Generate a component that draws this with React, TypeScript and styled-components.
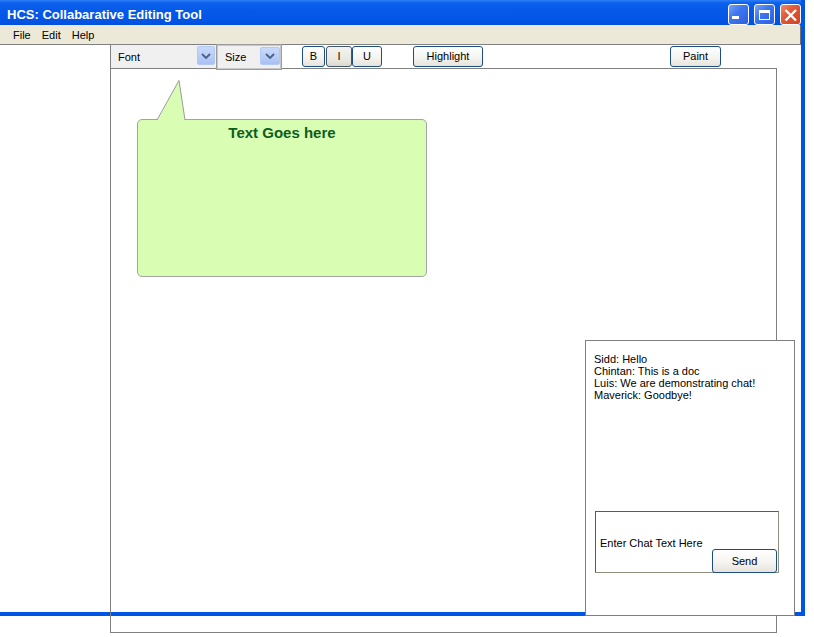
import React from "react";
import styled, { createGlobalStyle } from "styled-components";

const GlobalStyle = createGlobalStyle`
  html, body { margin: 0; padding: 0; background: #ffffff; }
  body {
    font-family: "Liberation Sans", Arial, sans-serif;
    width: 814px;
    height: 637px;
    overflow: hidden;
  }
  * { box-sizing: border-box; }
`;

const Window = styled.div`
  position: relative;
  width: 805px;
  height: 616px;
  border-right: 4px solid #0055e5;
  border-bottom: 4px solid #0055e5;
  display: flex;
  flex-direction: column;
`;

const TitleBar = styled.div`
  height: 25px;
  flex: none;
  display: flex;
  align-items: flex-start;
  padding-left: 7px;
  background: linear-gradient(
    to bottom,
    #2f7df5 0%,
    #0b60ec 12%,
    #0558e8 50%,
    #0255e4 85%,
    #0050d8 100%
  );
`;

const Title = styled.div`
  flex: 1;
  margin-top: 7px;
  font-size: 13px;
  line-height: 15px;
  font-weight: bold;
  color: #ffffff;
`;

const Controls = styled.div`
  display: flex;
  gap: 5px;
  margin-top: 4px;
`;

const CtrlButton = styled.div<{ $close?: boolean }>`
  width: 21px;
  height: 21px;
  border: 1px solid #ffffff;
  border-radius: 3px;
  display: flex;
  background: ${(p) =>
    p.$close
      ? "linear-gradient(135deg, #f08a6c 0%, #e25a38 40%, #cf4220 100%)"
      : "linear-gradient(135deg, #7aa3f8 0%, #3f77ef 40%, #2a5fe0 100%)"};
`;

const MenuBar = styled.div`
  height: 20px;
  flex: none;
  width: 801px;
  display: flex;
  align-items: center;
  gap: 11px;
  padding-left: 13px;
  background: #ece9d8;
  border-bottom: 1px solid #808080;
  border-right: 1px solid #6e6e6e;
`;

const MenuItem = styled.span`
  font-size: 11px;
  color: #000000;
`;

const Workspace = styled.div`
  flex: 1;
  display: flex;
  flex-direction: column;
  padding-left: 110px;
`;

const Toolbar = styled.div`
  height: 23px;
  flex: none;
  display: flex;
  align-items: flex-start;
`;

const FontCombo = styled.div`
  width: 106px;
  height: 23px;
  display: flex;
  align-items: center;
  justify-content: space-between;
  padding-left: 7px;
  padding-right: 1px;
  background: #f0f0f0;
  border-left: 1px solid #808080;
`;

const SizeCombo = styled.div`
  width: 66px;
  height: 26px;
  margin-top: -1px;
  display: flex;
  align-items: center;
  justify-content: space-between;
  padding-left: 8px;
  padding-right: 1px;
  background: #f0f0f0;
  border: 1px solid #9c9c9c;
  box-shadow: inset 0 0 0 1px #c8c8c8;
  position: relative;
`;

const ComboLabel = styled.span`
  font-size: 11px;
  color: #000000;
`;

const DropButton = styled.div<{ $w: number; $h: number; $top: number }>`
  width: ${(p) => p.$w}px;
  height: ${(p) => p.$h}px;
  align-self: flex-start;
  margin-top: ${(p) => p.$top}px;
  border: 1px solid #b4c8f4;
  border-radius: 2px;
  background: linear-gradient(to bottom, #c9d9fb 0%, #b6cbf7 60%, #a9c0f3 100%);
  display: flex;
  align-items: center;
  justify-content: center;
`;

const ToolButton = styled.button<{ $w: number; $ml: number; $pressed?: boolean }>`
  width: ${(p) => p.$w}px;
  height: 21px;
  margin: 1px 0 0 ${(p) => p.$ml}px;
  padding: 0;
  border: 1px solid ${(p) => (p.$pressed ? "#40566e" : "#1c4f80")};
  border-radius: 3px;
  background: ${(p) =>
    p.$pressed
      ? "linear-gradient(to bottom, #f4f3ee 0%, #e9e7df 70%, #dcd8cc 100%)"
      : "linear-gradient(to bottom, #ffffff 0%, #f5f4f0 55%, #e6e3da 100%)"};
  font-family: "Liberation Sans", Arial, sans-serif;
  font-size: 11px;
  color: #000000;
  line-height: 19px;
  cursor: default;
`;

const Document = styled.div`
  width: 667px;
  height: 565px;
  flex: none;
  border: 1px solid #808080;
  background: transparent;
  padding: 11px 0 0 26px;
`;

const BubbleWrap = styled.div`
  width: 290px;
  display: flex;
  flex-direction: column;
`;

const Tail = styled.svg`
  display: block;
  position: relative;
  z-index: 1;
  margin-bottom: -2px;
`;

const BubbleBody = styled.div`
  width: 290px;
  height: 158px;
  border: 1px solid #a3a3a3;
  border-radius: 5px;
  background: #d9fdb3;
  padding-top: 4px;
  text-align: center;
  font-size: 15px;
  line-height: 18px;
  font-weight: bold;
  color: #0b5d1e;
`;

const ChatPanel = styled.div`
  position: absolute;
  left: 585px;
  top: 340px;
  width: 210px;
  height: 276px;
  z-index: 2;
  border: 1px solid #7f7f7f;
  background: #ffffff;
  display: flex;
  flex-direction: column;
  padding: 12px 0 42px 8px;
`;

const Messages = styled.div`
  flex: 1;
  font-size: 11px;
  line-height: 12px;
  color: #000000;
`;

const ChatInput = styled.div`
  position: relative;
  width: 184px;
  height: 62px;
  margin-left: 1px;
  display: flex;
  align-items: center;
  padding-left: 4px;
  padding-top: 2px;
  border: 1px solid #5a5a5a;
  border-right-color: #8f8f80;
  border-bottom-color: #8f8f80;
  font-size: 11px;
  color: #000000;
`;

const SendButton = styled.button`
  position: absolute;
  right: 1px;
  bottom: -1px;
  width: 65px;
  height: 24px;
  padding: 0;
  border: 1px solid #1c4f80;
  border-radius: 3px;
  background: linear-gradient(to bottom, #ffffff 0%, #f5f4f0 55%, #e6e3da 100%);
  font-family: "Liberation Sans", Arial, sans-serif;
  font-size: 11px;
  color: #000000;
  cursor: default;
`;

const Chevron = () => (
  <svg width="10" height="6" viewBox="0 0 10 6">
    <polyline points="1,1 5,5 9,1" fill="none" stroke="#4d6185" strokeWidth="1.8" />
  </svg>
);

export default function App() {
  return (
    <>
      <GlobalStyle />
      <Window>
        <TitleBar>
          <Title>HCS: Collabarative Editing Tool</Title>
          <Controls>
            <CtrlButton>
              <svg width="19" height="19" viewBox="0 0 19 19">
                <rect x="3" y="11" width="7" height="3" fill="#ffffff" />
              </svg>
            </CtrlButton>
            <CtrlButton>
              <svg width="19" height="19" viewBox="0 0 19 19">
                <rect x="4" y="5" width="11" height="3" fill="#ffffff" />
                <rect x="4" y="5" width="1" height="10" fill="#ffffff" />
                <rect x="14" y="5" width="1" height="10" fill="#ffffff" />
                <rect x="4" y="14" width="11" height="1" fill="#ffffff" />
              </svg>
            </CtrlButton>
            <CtrlButton $close>
              <svg width="19" height="19" viewBox="0 0 19 19">
                <line x1="4.5" y1="5" x2="15" y2="15.5" stroke="#ffffff" strokeWidth="2.3" />
                <line x1="15" y1="5" x2="4.5" y2="15.5" stroke="#ffffff" strokeWidth="2.3" />
              </svg>
            </CtrlButton>
          </Controls>
        </TitleBar>
        <MenuBar>
          <MenuItem>File</MenuItem>
          <MenuItem>Edit</MenuItem>
          <MenuItem>Help</MenuItem>
        </MenuBar>
        <Workspace>
          <Toolbar>
            <FontCombo>
              <ComboLabel>Font</ComboLabel>
              <DropButton $w={18} $h={19} $top={1}>
                <Chevron />
              </DropButton>
            </FontCombo>
            <SizeCombo>
              <ComboLabel>Size</ComboLabel>
              <DropButton $w={20} $h={18} $top={2}>
                <Chevron />
              </DropButton>
            </SizeCombo>
            <ToolButton $w={23} $ml={20}>B</ToolButton>
            <ToolButton $w={26} $ml={1} $pressed>I</ToolButton>
            <ToolButton $w={30} $ml={0}>U</ToolButton>
            <ToolButton $w={70} $ml={31}>Highlight</ToolButton>
            <ToolButton $w={51} $ml={187}>Paint</ToolButton>
          </Toolbar>
          <Document>
            <BubbleWrap>
              <Tail width="50" height="41" viewBox="0 0 50 41">
                <polygon points="20,41 42,0.5 48,41" fill="#d9fdb3" />
                <polyline points="20,40 42,0.5 48,40" fill="none" stroke="#9a9a9a" strokeWidth="1" />
              </Tail>
              <BubbleBody>Text Goes here</BubbleBody>
            </BubbleWrap>
          </Document>
        </Workspace>
        <ChatPanel>
          <Messages>
            <div>Sidd: Hello</div>
            <div>Chintan: This is a doc</div>
            <div>Luis: We are demonstrating chat!</div>
            <div>Maverick: Goodbye!</div>
          </Messages>
          <ChatInput>
            Enter Chat Text Here
            <SendButton>Send</SendButton>
          </ChatInput>
        </ChatPanel>
      </Window>
    </>
  );
}
